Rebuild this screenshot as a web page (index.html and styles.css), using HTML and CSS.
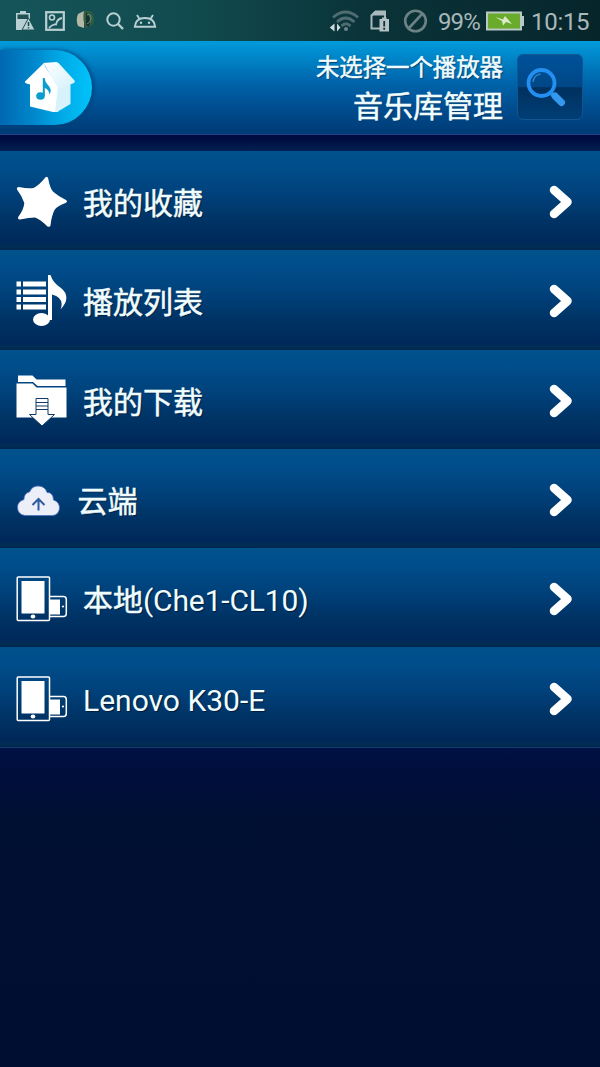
FILE: index.html
```html
<!doctype html>
<html lang="zh-CN">
    <head>
        <meta charset="utf-8">
        <title>音乐库管理</title>
        <link rel="stylesheet" href="styles.css">
    </head>
    <body>
        <!-- shared icons -->
        <svg class="defs">
            <linearGradient id="roof" x1="0" y1="0" x2="1" y2="1">
                <stop offset="0" stop-color="#fff"/>
                <stop offset="1" stop-color="#d2f1fb"/>
            </linearGradient>
            <symbol id="chevron" viewBox="0 0 24 36">
                <path d="M5 6L18.500 18L5 30" fill="none" stroke="#fff" stroke-width="8.500" stroke-linecap="round" stroke-linejoin="round"/>
            </symbol>
            <symbol id="devices" viewBox="0 0 52 46">
                <rect x="1.200" y="1" width="32.300" height="43.500" rx="1" fill="none" stroke="#fff" stroke-width="1.500"/>
                <rect x="5.500" y="5" width="23" height="32.500" fill="#fff"/>
                <ellipse cx="17" cy="40.500" rx="2.300" ry="1.900" fill="#fff"/>
                <path d="M34 20.500H47.500Q50.300 20.500 50.300 23.500V37.500Q50.300 40.500 47.500 40.500H34" fill="none" stroke="#fff" stroke-width="1.500"/>
                <path d="M34 23.500H44V38.500H34z" fill="#fff"/>
                <circle cx="47" cy="30.500" r="1.100" fill="#fff"/>
            </symbol>
        </svg>

        <div class="status">
            <svg class="status-left" width="160" height="41" viewBox="0 0 160 41">
                <path d="M16 13H20V11H26V13H30V19L24 29V30H16z" fill="#b9d0d2"/>
                <path d="M17.500 14.500H28.500V19H17.500z" fill="#215055"/>
                <path d="M28.500 18L35 30H22z" fill="#b9d0d2" stroke="#215055"/>
                <path d="M28.500 22V26M28.500 27.300V28.500" stroke="#12484c" stroke-width="1.500"/>
                <rect x="46.200" y="12.200" width="17.600" height="17.600" fill="none" stroke="#b9d0d2" stroke-width="2.200"/>
                <circle cx="52" cy="17.500" r="2.500" fill="none" stroke="#b9d0d2" stroke-width="1.600"/>
                <path d="M49 28Q53 24 56 24.500Q57 19 62 18" fill="none" stroke="#b9d0d2" stroke-width="1.800"/>
                <path d="M78 14L84 11V28L78 26Q75.500 20 78 14z" fill="#b4b8a6"/>
                <path d="M84 11Q94 9 94 19Q94 27 86 28Q82 20 84 11z" fill="#315c42"/>
                <path d="M86 12Q92 18 89 27L86 25z" fill="#14312f"/>
                <path d="M87 15Q91 13 91 19Q90 23 87 24" fill="none" stroke="#6f9473"/>
                <circle cx="113.500" cy="19.500" r="6.200" fill="none" stroke="#b9d0d2" stroke-width="2"/>
                <path d="M118 24L123 29" stroke="#b9d0d2" stroke-width="2.400"/>
                <path d="M134.800 26.800Q135.500 18 145 18Q154.500 18 155.200 26.800zM139.500 19L137 15M150.500 19L153 15" fill="none" stroke="#b9d0d2" stroke-width="1.900"/>
                <circle cx="141" cy="22.800" r="1.200" fill="#b9d0d2"/>
                <circle cx="149" cy="22.800" r="1.200" fill="#b9d0d2"/>
            </svg>
            <svg class="status-signal" width="102" height="41" viewBox="0 0 102 41">
                <g fill="none" stroke="#4f6d71" stroke-width="2.800">
                    <path d="M4 17.500Q16.500 6.500 29 17.500"/>
                    <path d="M8 22Q16.500 14 25.500 22"/>
                    <path d="M12.500 26Q17 21.500 21.500 26"/>
                </g>
                <circle cx="17" cy="29" r="2" fill="#6b8588"/>
                <path d="M5.500 23.500V31.500L.8 27.500zM8 23.500V31.500L11.500 27.500z" fill="#d0dcde"/>
                <!-- sim card with a warning mark -->
                <path d="M42.500 15.500L46.500 11.500H56V28.500H42.500z" fill="#0d3338" stroke="#a9b9bc" stroke-width="2"/>
                <path d="M42 15.500L46.500 11H56.500V15.500z" fill="#a9b9bc"/>
                <path d="M50.500 19H53V17.500H57.500V19H60V31.500H50.500z" fill="#b3c2c5"/>
                <path d="M55.200 21V26.500M55.200 27.800V29.800" stroke="#0d3338" stroke-width="1.800"/>
                <circle cx="86.500" cy="21" r="10.300" fill="none" stroke="#6c8386" stroke-width="2.600"/>
                <path d="M80 28L93 14" stroke="#6c8386" stroke-width="2.600"/>
            </svg>
            <span class="percent">99%</span>
            <svg class="battery" width="38" height="41" viewBox="0 0 38 41">
                <rect x="1" y="12.500" width="34" height="17" fill="#69ac2b" stroke="#b9c7c7" stroke-width="2"/>
                <path d="M36 16H38V26H36z" fill="#b9c7c7"/>
                <path d="M9 17L17 19.500L19 16L26 24L20 22L17 25.500L16 21z" fill="#dce9ca"/>
            </svg>
            <span class="clock">10:15</span>
        </div>

        <div class="header">
            <a class="home">
                <svg width="52" height="52" viewBox="0 0 52 52">
                    <path d="M6 22L20 4L34 25V51L29 51L6 45.500z" fill="#fff"/>
                    <path d="M34 25L46.500 21V43L34 50.500L31 51z" fill="#d7f2fb"/>
                    <path d="M19.500 2L32 1Q34 1 35 2.500L50.500 19.500Q51.500 21 50 22L36 27.500Q34.500 28 33.500 26.500z" fill="url(#roof)"/>
                    <path d="M20 2L1 20.500Q.5 22 2.500 22.500L8 24L22 10z" fill="#fff"/>
                    <ellipse cx="16.500" cy="35" rx="4.300" ry="3.800" fill="#0b9dcd"/>
                    <path d="M18.800 35V17H20.600Q21 21.500 24 24Q28.500 28.500 25.500 33.500Q25 28.500 20.800 27V35z" fill="#0b9dcd"/>
                </svg>
            </a>
            <div class="titles">
                <div class="player">未选择一个播放器</div>
                <div class="title">音乐库管理</div>
            </div>
            <a class="search">
                <svg width="64" height="64" viewBox="0 0 64 64">
                    <circle cx="23.500" cy="28" r="13" fill="none" stroke="#238ff0" stroke-width="3.800"/>
                    <path d="M15 27Q16 20 22.500 19" fill="none" stroke="#2d83c8" stroke-width="1.500"/>
                    <path d="M33 38L36 41" stroke="#238ff0" stroke-width="4"/>
                    <path d="M37 41L43.500 47.500" stroke="#3398ee" stroke-width="7" stroke-linecap="round"/>
                </svg>
            </a>
        </div>

        <div class="list">
            <a class="row">
                <svg class="icon" width="52" height="52" viewBox="0 0 52 52">
                    <path d="M29.500 1.300Q31.500 0 32.200 2.500Q34 13 37.500 16Q42 20 50 24Q52 25.300 50 26.800Q41 30 38.500 34Q35.500 40 34.500 49.500Q34 51.500 31.500 50.500Q24 43 19 41.500Q13 41.500 4 43.500Q1.500 43.500 2.200 41Q8 33 8.300 27Q6 20 1 13.500Q.3 11 3 11Q12 13 17.500 12Q23 9.500 29.500 1.300z" fill="#fff"/>
                </svg>
                <span class="label">我的收藏</span>
                <svg class="arrow"><use href="#chevron"/></svg>
            </a>
            <a class="row">
                <svg class="icon" width="52" height="52" viewBox="0 0 52 52">
                    <path d="M.5 6.500H5V11.500H.5zM.5 14.500H5V19.500H.5zM.5 22H5V27H.5zM.5 29.500H5V34.500H.5zM7 6.500H30V11.500H7zM7 14.500H30V19.500H7zM7 22H30V27H7zM7 29.500H30V34.500H7z" fill="#fff"/>
                    <ellipse cx="25.500" cy="44.500" rx="8.500" ry="6.500" fill="#fff"/>
                    <path d="M32 0H34.500Q37 8 45 13Q56 22 44.500 34.500Q49 23 36 19.500V45H32z" fill="#fff"/>
                </svg>
                <span class="label">播放列表</span>
                <svg class="arrow"><use href="#chevron"/></svg>
            </a>
            <a class="row">
                <svg class="icon" width="52" height="52" viewBox="0 0 52 52">
                    <path d="M2 .5H16.500L20.500 4.500H49.500V11H21.500L17 7H2z" fill="#fff"/>
                    <path d="M.5 8.500H16.500L20.500 12.500H50.500V42.500H.5z" fill="#fff"/>
                    <path d="M20 23.500H32V39.500H38.500L26 51L13.500 39.500H20z" fill="#fff" stroke="#123a66"/>
                    <path d="M20 27.500H32M20 31H32M20 34.500H32" stroke="#123a66" stroke-width="1.200"/>
                </svg>
                <span class="label">我的下载</span>
                <svg class="arrow"><use href="#chevron"/></svg>
            </a>
            <a class="row cloud">
                <svg class="icon" width="46" height="52" viewBox="0 0 46 52">
                    <path d="M9 41.500Q1.500 40.500 1.500 33Q1.500 27.500 8 25.500Q8 19 13.500 18Q16 12 22 12Q29 12 31 18.500Q37 18 37.500 26Q43.500 28 43.500 34Q43 40.500 37 41.500z" fill="#eceef8" stroke="#4e70c4" stroke-width=".8"/>
                    <path d="M22.500 36.500V26M16.500 31L22.500 25L28.500 31" fill="none" stroke="#2f5ba0" stroke-width="2"/>
                </svg>
                <span class="label">云端</span>
                <svg class="arrow"><use href="#chevron"/></svg>
            </a>
            <a class="row">
                <svg class="icon device"><use href="#devices"/></svg>
                <span class="label">本地<span class="latin">(Che1-CL10)</span></span>
                <svg class="arrow"><use href="#chevron"/></svg>
            </a>
            <a class="row">
                <svg class="icon device"><use href="#devices"/></svg>
                <span class="label name">Lenovo K30-E</span>
                <svg class="arrow"><use href="#chevron"/></svg>
            </a>
        </div>
    </body>
</html>
```
FILE: styles.css
```css
* {
    box-sizing: border-box;
}

body {
    margin: 0;
    min-height: 1067px;
    background: linear-gradient(#000c40 134px, #001144 747px, #000e3c 775px, #001033 820px, #000f31);
    color: #f0fdff;
    font-family: Roboto, "Noto Sans CJK SC", sans-serif;
}

svg {
    display: block;
    flex: none;
}

.defs {
    position: absolute;
    width: 0;
    height: 0;
}

/* system bar */
.status {
    display: flex;
    align-items: center;
    height: 41px;
    background: linear-gradient(90deg, #15555a, #114a4e 33%, #0a3439 60%, #06252b);
    color: #a9b8bb;
    font-size: 24px;
}

.status-signal {
    margin-left: 169px;
}

.percent {
    width: 48px;
    padding: 2px 0 0 7px;
    letter-spacing: -0.9px;
}

.battery {
    margin-left: 7px;
}

.clock {
    padding: 2px 0 0 7px;
    letter-spacing: -0.3px;
}

/* title bar */
.header {
    display: flex;
    height: 94px;
    background: linear-gradient(#009bdb, #0089cb 15%, #0067ae 42%, #004e91 70%, #003b75);
    border-bottom: 1px solid #234487;
}

.home {
    width: 92px;
    height: 75px;
    margin-top: 9px;
    padding: 11px 0 0 24px;
    background: linear-gradient(90deg, #0068b2, #0086ca 35%, #00a8e5 65%, #00c3fa);
    border-radius: 0 38px 38px 0;
    box-shadow: 2px 0 4px #00447f;
}

.titles {
    flex: 1;
    padding: 10px 14px 0 0;
    text-align: right;
    text-shadow: 1px 1px 1px #003767;
    -webkit-text-stroke: 0.5px #f0fdff;
}

.player {
    font-size: 23.400px;
    line-height: 34px;
}

.title {
    font-size: 30px;
    line-height: 44px;
}

.search {
    width: 66px;
    height: 66px;
    margin: 13px 17px 0 0;
    border: 1px solid #12568f;
    border-radius: 6px;
    background: linear-gradient(#00519a, #004786 50%, #00315f 51%, #003e76);
}

/* library entries */
.list {
    margin-top: 4px;
    padding-top: 12px;
    background: linear-gradient(#000c40, #002152 12px);
    border-bottom: 1px solid #173c75;
}

.row {
    display: flex;
    align-items: center;
    height: 99.300px;
    padding: 3px 27px 0 16px;
    background: linear-gradient(#00528c, #004e8c 15%, #00437d 40%, #003365 70%, #00285a 93%, #002e54 97%, #00264c);
}

.label {
    flex: 1;
    margin-left: 15px;
    padding-top: 4px;
    font-size: 30px;
    line-height: 44px;
    text-shadow: 1px 1px 1px #001c3c;
    -webkit-text-stroke: 0.5px #f0fdff;
}

.latin {
    letter-spacing: -0.15px;
    -webkit-text-stroke: 0;
}

.name {
    -webkit-text-stroke: 0;
}

.cloud .label {
    margin-left: 15.500px;
}

.device {
    width: 52px;
    height: 46px;
}

.arrow {
    width: 24px;
    height: 36px;
}
```
